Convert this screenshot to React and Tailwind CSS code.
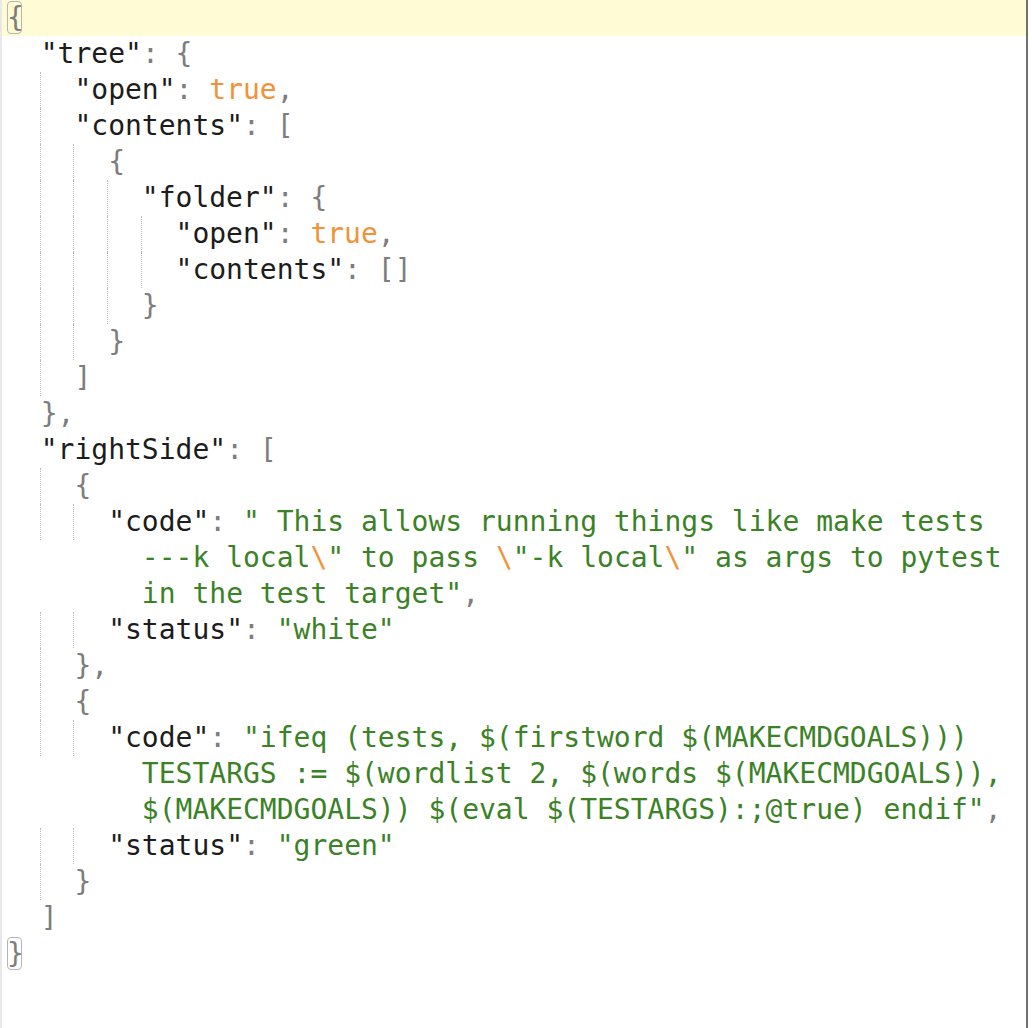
import React from "react";

const K = "k"; // key
const P = "p"; // punctuation
const S = "s"; // string
const C = "c"; // constant / escape

const colorClass = {
  k: "text-[#1c1c1c]",
  p: "text-[#7d7d7d]",
  s: "text-[#3b8227]",
  c: "text-[#f19238]",
};

const lines = [
  { indent: 0, tokens: [[P, "{", "open"]], active: true },
  { indent: 2, tokens: [[K, '"tree"'], [P, ": {"]] },
  { indent: 4, tokens: [[K, '"open"'], [P, ": "], [C, "true"], [P, ","]] },
  { indent: 4, tokens: [[K, '"contents"'], [P, ": ["]] },
  { indent: 6, tokens: [[P, "{"]] },
  { indent: 8, tokens: [[K, '"folder"'], [P, ": {"]] },
  { indent: 10, tokens: [[K, '"open"'], [P, ": "], [C, "true"], [P, ","]] },
  { indent: 10, tokens: [[K, '"contents"'], [P, ": []"]] },
  { indent: 8, tokens: [[P, "}"]] },
  { indent: 6, tokens: [[P, "}"]] },
  { indent: 4, tokens: [[P, "]"]] },
  { indent: 2, tokens: [[P, "},"]] },
  { indent: 2, tokens: [[K, '"rightSide"'], [P, ": ["]] },
  { indent: 4, tokens: [[P, "{"]] },
  {
    indent: 6,
    tokens: [[K, '"code"'], [P, ": "], [S, '" This allows running things like make tests']],
  },
  {
    indent: 8,
    wrap: true,
    tokens: [
      [S, "---k local"],
      [C, "\\"],
      [S, '" to pass '],
      [C, "\\"],
      [S, '"-k local'],
      [C, "\\"],
      [S, '" as args to pytest'],
    ],
  },
  { indent: 8, wrap: true, tokens: [[S, 'in the test target"'], [P, ","]] },
  { indent: 6, tokens: [[K, '"status"'], [P, ": "], [S, '"white"']] },
  { indent: 4, tokens: [[P, "},"]] },
  { indent: 4, tokens: [[P, "{"]] },
  {
    indent: 6,
    tokens: [[K, '"code"'], [P, ": "], [S, '"ifeq (tests, $(firstword $(MAKECMDGOALS)))']],
  },
  {
    indent: 8,
    wrap: true,
    tokens: [[S, "TESTARGS := $(wordlist 2, $(words $(MAKECMDGOALS)),"]],
  },
  {
    indent: 8,
    wrap: true,
    tokens: [[S, '$(MAKECMDGOALS)) $(eval $(TESTARGS):;@true) endif"'], [P, ","]],
  },
  { indent: 6, tokens: [[K, '"status"'], [P, ": "], [S, '"green"']] },
  { indent: 4, tokens: [[P, "}"]] },
  { indent: 2, tokens: [[P, "]"]] },
  { indent: 0, tokens: [[P, "}", "close"]] },
];

function Bracket({ ch }) {
  return (
    <span className="relative inline-block">
      <span className="absolute left-0 top-[1px] h-[33px] w-[15px] rounded-[4px] border-[1.5px] border-[#b5b5b5]" />
      {ch}
    </span>
  );
}

function Line({ line }) {
  const guides = line.wrap ? 0 : Math.max(0, line.indent / 2 - 1);
  const rest = line.indent - guides * 2;
  const g = [];
  for (let i = 0; i < guides; i++) {
    g.push(
      <span
        key={i}
        className="inline-block h-[36px] w-[2ch] align-top border-r border-dotted border-[#bdbdbd]"
      />
    );
  }
  return (
    <div
      className={
        "h-[36px] leading-[36px] whitespace-pre " +
        (line.active ? "bg-[#fffbd4]" : "")
      }
    >
      <span className="pl-[5px]" />
      {g}
      {rest > 0 ? " ".repeat(rest) : null}
      {line.tokens.map(([t, text, br], i) =>
        br ? (
          <span key={i} className={colorClass[t]}>
            <Bracket ch={text} />
          </span>
        ) : (
          <span key={i} className={colorClass[t]}>
            {text}
          </span>
        )
      )}
    </div>
  );
}

export default function App() {
  return (
    <div className="h-[1028px] w-[1032px] bg-white overflow-hidden">
      <div
        className="h-[1028px] w-[1028px] border-l-2 border-r-2 border-l-[#e8e8e8] border-r-[#707070] text-[28px]"
        style={{ fontFamily: '"DejaVu Sans Mono", "Liberation Mono", monospace' }}
      >
        {lines.map((l, i) => (
          <Line key={i} line={l} />
        ))}
      </div>
    </div>
  );
}
